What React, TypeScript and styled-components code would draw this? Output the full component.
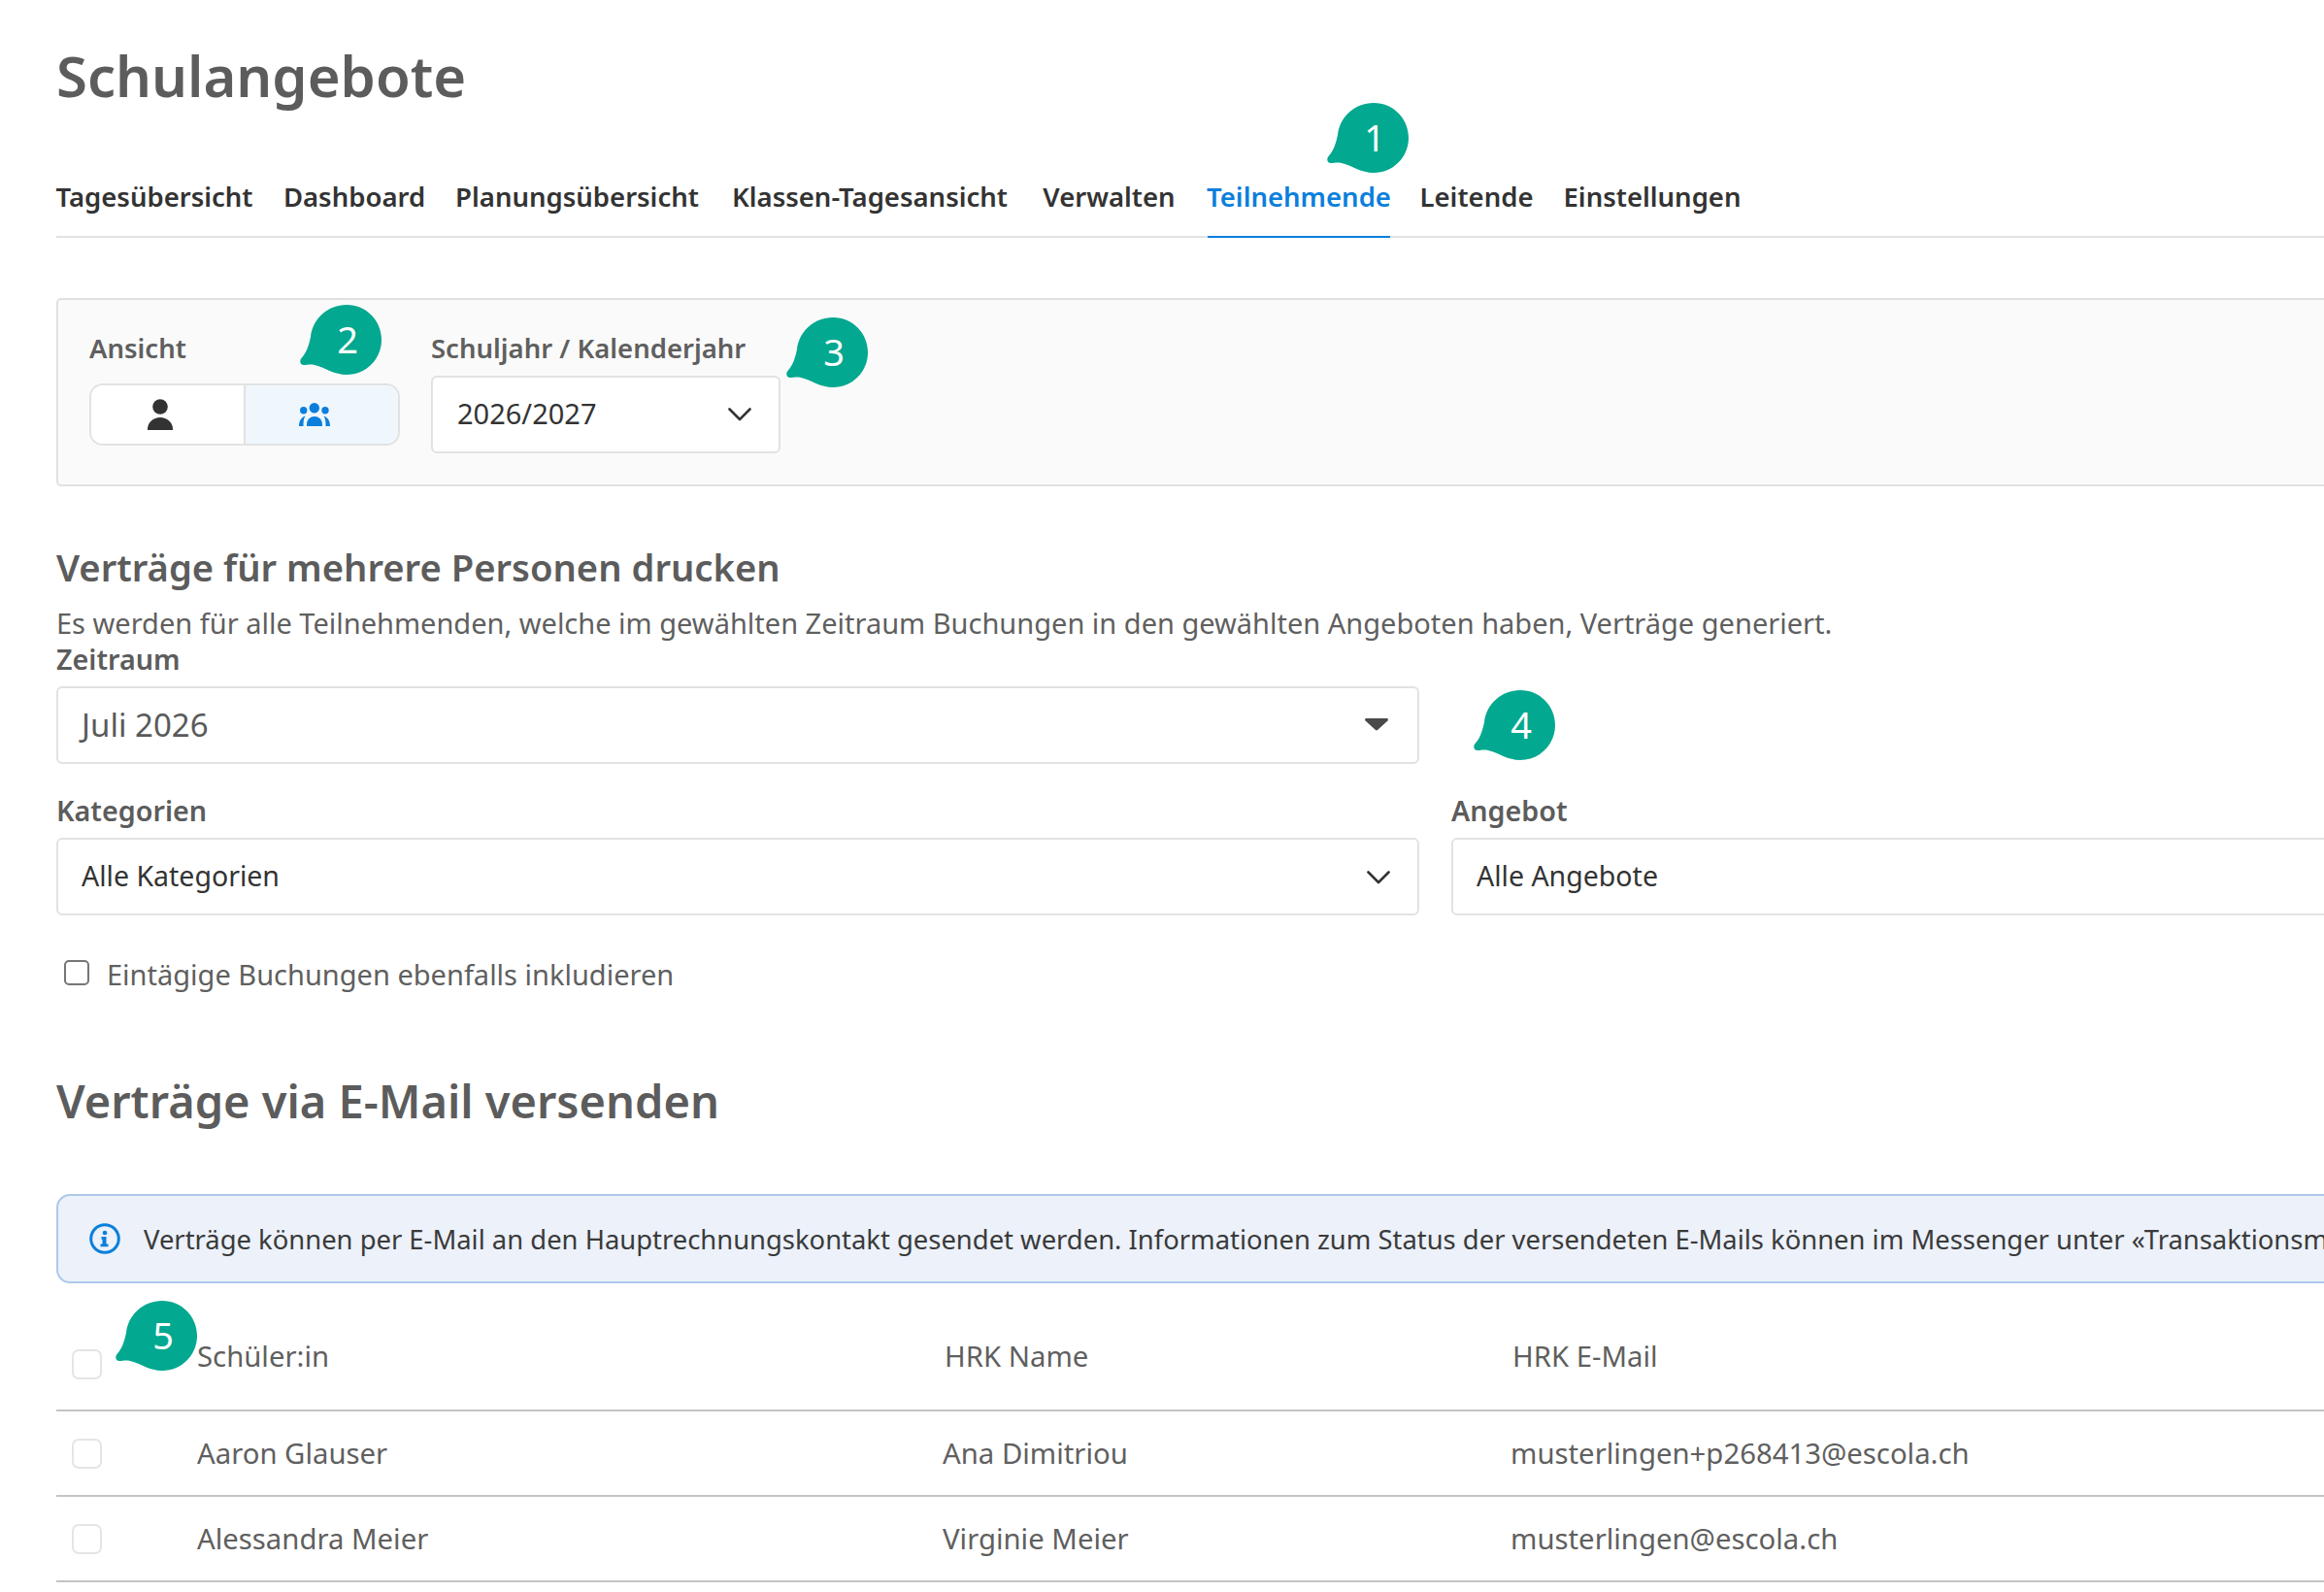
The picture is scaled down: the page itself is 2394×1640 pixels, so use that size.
import React from "react";
import styled, { createGlobalStyle } from "styled-components";

const Global = createGlobalStyle`
  html, body { margin: 0; padding: 0; background: #fff; overflow: hidden; }
  body { font-family: "Noto Sans", "Open Sans", sans-serif; color: #5a5a5a; }
  #root { width: 2394px; height: 1640px; overflow: hidden; }
`;

const Page = styled.div`
  position: relative;
  width: 2800px;
  padding: 0 0 0 58px;
  box-sizing: border-box;
`;
const Title = styled.h1`
  margin: 0;
  padding-top: 41px;
  height: 125px;
  box-sizing: border-box;
  font-size: 58px;
  line-height: 74px;
  font-weight: 600;
  color: #5c5c5c;
`;
const TabBar = styled.nav`
  display: flex;
  gap: 32px;
  height: 120px;
  box-sizing: border-box;
  border-bottom: 2px solid #e2e2e2;
  margin-bottom: 62px;
  padding-top: 58px;
`;
const Tab = styled.a<{ $active?: boolean; $w: number }>`
  display: flex;
  justify-content: center;
  width: ${(p) => p.$w}px;
  height: 60px;
  font-size: 27.5px;
  line-height: 40px;
  font-weight: 600;
  white-space: nowrap;
  color: ${(p) => (p.$active ? "#0b7fdb" : "#333")};
  border-bottom: ${(p) => (p.$active ? "2px solid #0b7fdb" : "none")};
`;
const FilterPanel = styled.section`
  display: flex;
  gap: 32px;
  height: 194px;
  box-sizing: border-box;
  background: #fafafa;
  border: 2px solid #e0e0e0;
  border-radius: 5px;
  padding: 29px 32px;
`;
const Field = styled.div`
  display: flex;
  flex-direction: column;
`;
const PanelLabel = styled.label`
  font-size: 27.5px;
  line-height: 42px;
  font-weight: 600;
  color: #5f5f5f;
`;
const Segmented = styled.div`
  display: flex;
  width: 320px;
  height: 64px;
  margin-top: 15px;
  box-sizing: border-box;
  border: 2px solid #e2e2e2;
  border-radius: 14px;
  overflow: hidden;
  background: #fff;
`;
const Segment = styled.div<{ $active?: boolean }>`
  flex: 1;
  display: flex;
  align-items: center;
  justify-content: center;
  padding-right: 16px;
  background: ${(p) => (p.$active ? "#eff7fd" : "#fff")};
  & + & { border-left: 2px solid #e2e2e2; }
`;
const YearSelect = styled.div`
  display: flex;
  align-items: center;
  justify-content: space-between;
  width: 360px;
  height: 80px;
  margin-top: 7px;
  box-sizing: border-box;
  border: 2px solid #e2e2e2;
  border-radius: 6px;
  background: #fff;
  padding: 0 28px 4px 25px;
  font-size: 29px;
  color: #333;
`;
const SubHeading = styled.h2`
  margin: 58px 0 0;
  font-size: 38.200px;
  line-height: 50px;
  font-weight: 600;
  color: #5c5c5c;
`;
const Description = styled.p`
  margin: 14px 0 0;
  font-size: 29px;
  line-height: 38px;
  color: #5f5f5f;
`;
const FormLabel = styled.label`
  display: block;
  font-size: 28.700px;
  line-height: 36px;
  font-weight: 600;
  color: #5c5c5c;
`;
const FormGrid = styled.div`
  display: grid;
  grid-template-columns: 1404px 1300px;
  column-gap: 33px;
`;
const SelectBox = styled.div<{ $dark?: boolean; $large?: boolean }>`
  display: flex;
  align-items: center;
  justify-content: space-between;
  height: 80px;
  margin-top: 10px;
  box-sizing: border-box;
  border: 2px solid #e2e2e2;
  border-radius: 6px;
  background: #fff;
  padding: 0 28px 2px 24px;
  font-size: ${(p) => (p.$large ? "33px" : "28.500px")};
  color: ${(p) => (p.$dark ? "#333" : "#5a5a5a")};
`;
const CaretSlot = styled.span`
  display: flex;
  padding-right: 2px;
`;
const ChevronSlot = styled.span`
  display: flex;
  margin-top: 3px;
`;
const ZeitraumCell = styled.div`
  grid-column: 1;
`;
const CategoryCell = styled.div`
  margin-top: 30px;
`;
const CheckRow = styled.div`
  display: flex;
  align-items: center;
  gap: 18px;
  margin: 41px 0 1px 8px;
  font-size: 29px;
  line-height: 40px;
  color: #5f5f5f;
`;
const CheckBoxSmall = styled.span`
  width: 26px;
  height: 26px;
  margin-top: -4px;
  box-sizing: border-box;
  border: 2px solid #767676;
  border-radius: 5px;
  background: #fff;
`;
const MainHeading = styled.h2`
  margin: 79px 0 0;
  font-size: 47px;
  line-height: 62px;
  font-weight: 600;
  color: #5c5c5c;
`;
const InfoBox = styled.div`
  display: flex;
  align-items: center;
  gap: 24px;
  height: 92px;
  margin-top: 65px;
  padding-left: 32px;
  box-sizing: border-box;
  background: #ecf1fa;
  border: 2px solid #aec8ea;
  border-radius: 14px;
  font-size: 27.400px;
  color: #3a3a3a;
  white-space: nowrap;
  & > svg { flex-shrink: 0; }
`;
const TableRow = styled.div<{ $head?: boolean }>`
  display: grid;
  grid-template-columns: 145px 768px 585px 1fr;
  align-items: center;
  height: ${(p) => (p.$head ? "132px" : "88px")};
  padding-top: ${(p) => (p.$head ? "20px" : "0")};
  box-sizing: border-box;
  border-bottom: 2px solid #c4c4c4;
  font-size: 29.300px;
  color: #5f5f5f;
`;
const TableCheckCell = styled.div`
  padding-left: 16px;
`;
const TableBox = styled.span<{ $head?: boolean }>`
  display: block;
  width: 31px;
  height: 31px;
  box-sizing: border-box;
  border: 2px solid #e5e5e5;
  border-radius: 7px;
  margin-top: ${(p) => (p.$head ? "16px" : "0")};
`;
const HeadCell = styled.div<{ $shift?: number }>`
  margin-left: ${(p) => p.$shift ?? 0}px;
`;
const BadgeWrap = styled.div<{ $x: number; $y: number }>`
  position: absolute;
  left: ${(p) => p.$x}px;
  top: ${(p) => p.$y}px;
  width: 84px;
  height: 72px;
`;
const BadgeNumber = styled.span`
  position: absolute;
  left: 13px;
  top: -1px;
  width: 72px;
  height: 72px;
  display: flex;
  align-items: center;
  justify-content: center;
  font-size: 38px;
  color: #fff;
`;

const Badge = ({ n, x, y }: { n: number; x: number; y: number }) => (
  <BadgeWrap $x={x} $y={y}>
    <svg width="84" height="72" viewBox="0 0 84 72" aria-hidden="true">
      <path
        d="M48 0C68 0 84 16 84 36C84 56 68 72 48 72C35 72 27 65 15 62C11 61 7 62 4 62C.5 62 -1 58 1.500 55C7 49 9 42 11 33C13 14 29 0 48 0Z"
        fill="#02a88f"
      />
    </svg>
    <BadgeNumber>{n}</BadgeNumber>
  </BadgeWrap>
);

const InfoIcon = () => (
  <svg width="32" height="32" viewBox="0 0 32 32" fill="none" aria-hidden="true">
    <circle cx="16" cy="16" r="14.300" stroke="#0b7fdb" strokeWidth="3" />
    <circle cx="16" cy="10" r="2.300" fill="#0b7fdb" />
    <path d="M12.500 14h5v7.500h2v2.800h-8v-2.800h2v-4.700h-1z" fill="#0b7fdb" />
  </svg>
);

const PersonIcon = () => (
  <svg width="26" height="32" viewBox="0 0 26 32" aria-hidden="true">
    <circle cx="13" cy="8" r="7.800" fill="#333" />
    <path d="M0 32v-1C0 24 6 19 13 19s13 5 13 12v1z" fill="#333" />
  </svg>
);

const GroupIcon = () => (
  <svg width="32" height="24" viewBox="0 0 32 24" fill="#0b7fdb" aria-hidden="true">
    <circle cx="15.800" cy="5.200" r="5.200" />
    <circle cx="4.700" cy="7.700" r="3.700" />
    <circle cx="27" cy="7.700" r="3.700" />
    <path d="M8 24v-2a8 8 0 0 1 16 0v2z" />
    <path d="M0 24c0-4 1.500-9 6.500-10.500C4.500 16.500 4.500 20.500 4.500 24z" />
    <path d="M32 24c0-4-1.500-9-6.500-10.500C27.500 16.500 27.500 20.500 27.500 24z" />
  </svg>
);

const Chevron = () => (
  <ChevronSlot>
    <svg width="24" height="14" viewBox="0 0 24 14" fill="none" aria-hidden="true">
      <path d="M1.500 1.500L12 12L22.500 1.500" stroke="#333" strokeWidth="2.600" strokeLinecap="round" strokeLinejoin="round" />
    </svg>
  </ChevronSlot>
);

const Caret = () => (
  <svg width="24" height="14" viewBox="0 0 24 14" aria-hidden="true">
    <path d="M1.500 1h21c1.300 0 1.900 1.500 1 2.400L13 13c-.6.600-1.400.600-2 0L.5 3.400C-.4 2.500.2 1 1.500 1z" fill="#4a4a4a" />
  </svg>
);

const rows = [
  ["Aaron Glauser", "Ana Dimitriou", "musterlingen+p268413@escola.ch"],
  ["Alessandra Meier", "Virginie Meier", "musterlingen@escola.ch"],
];
const tabs: [string, number][] = [
  ["Tagesübersicht", 202],
  ["Dashboard", 146],
  ["Planungsübersicht", 249],
  ["Klassen-Tagesansicht", 290],
  ["Verwalten", 139],
  ["Teilnehmende", 188],
  ["Leitende", 114],
  ["Einstellungen", 184],
];

export default function App() {
  return (
    <Page>
      <Global />
      <Title>Schulangebote</Title>
      <TabBar>
        {tabs.map(([t, w]) => (
          <Tab key={t} $w={w} $active={t === "Teilnehmende"}>{t}</Tab>
        ))}
      </TabBar>
      <FilterPanel>
        <Field>
          <PanelLabel>Ansicht</PanelLabel>
          <Segmented>
            <Segment><PersonIcon /></Segment>
            <Segment $active><GroupIcon /></Segment>
          </Segmented>
        </Field>
        <Field>
          <PanelLabel>Schuljahr / Kalenderjahr</PanelLabel>
          <YearSelect>
            2026/2027
            <Chevron />
          </YearSelect>
        </Field>
      </FilterPanel>
      <SubHeading>Verträge für mehrere Personen drucken</SubHeading>
      <Description>
        Es werden für alle Teilnehmenden, welche im gewählten Zeitraum Buchungen in den gewählten Angeboten haben, Verträge generiert.
      </Description>
      <FormLabel>Zeitraum</FormLabel>
      <FormGrid>
        <ZeitraumCell>
          <SelectBox $large>
            Juli 2026
            <CaretSlot><Caret /></CaretSlot>
          </SelectBox>
        </ZeitraumCell>
        <div />
        <CategoryCell>
          <FormLabel>Kategorien</FormLabel>
          <SelectBox $dark>
            Alle Kategorien
            <Chevron />
          </SelectBox>
        </CategoryCell>
        <CategoryCell>
          <FormLabel>Angebot</FormLabel>
          <SelectBox $dark>Alle Angebote</SelectBox>
        </CategoryCell>
      </FormGrid>
      <CheckRow>
        <CheckBoxSmall />
        Eintägige Buchungen ebenfalls inkludieren
      </CheckRow>
      <MainHeading>Verträge via E-Mail versenden</MainHeading>
      <InfoBox>
        <InfoIcon />
        Verträge können per E-Mail an den Hauptrechnungskontakt gesendet werden. Informationen zum Status der versendeten E-Mails können im Messenger unter «Transaktionsmeldungen» eingesehen werden.
      </InfoBox>
      <TableRow $head>
        <TableCheckCell><TableBox $head /></TableCheckCell>
        <HeadCell>Schüler:in</HeadCell>
        <HeadCell $shift={2}>HRK Name</HeadCell>
        <HeadCell $shift={2}>HRK E-Mail</HeadCell>
      </TableRow>
      {rows.map((r) => (
        <TableRow key={r[0]}>
          <TableCheckCell><TableBox /></TableCheckCell>
          <div>{r[0]}</div>
          <div>{r[1]}</div>
          <div>{r[2]}</div>
        </TableRow>
      ))}
      <Badge n={1} x={1367} y={106} />
      <Badge n={2} x={309} y={314} />
      <Badge n={3} x={810} y={327} />
      <Badge n={4} x={1518} y={711} />
      <Badge n={5} x={119} y={1340} />
    </Page>
  );
}
